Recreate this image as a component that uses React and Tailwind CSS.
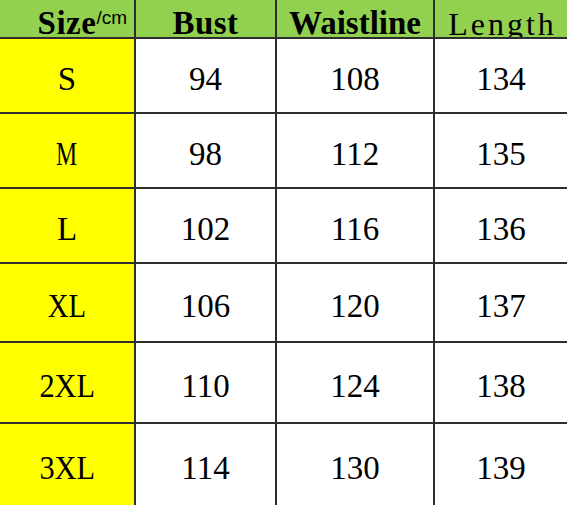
const rows = [
  { size: 'S', fit: '', bust: 94, waist: 108, length: 134 },
  { size: 'M', fit: 'scale-x-[0.72]', bust: 98, waist: 112, length: 135 },
  { size: 'L', fit: '', bust: 102, waist: 116, length: 136 },
  { size: 'XL', fit: 'scale-x-[0.87]', bust: 106, waist: 120, length: 137 },
  { size: '2XL', fit: 'scale-x-[0.92]', bust: 110, waist: 124, length: 138 },
  { size: '3XL', fit: 'scale-x-[0.92]', bust: 114, waist: 130, length: 139 },
]

const serif = "font-['Liberation_Serif','Times_New_Roman',serif]"

function Cell({ children, className = '' }) {
  return (
    <div className={`flex items-center justify-center bg-white pt-[7px] text-[33px] leading-none text-black ${serif} ${className}`}>
      {children}
    </div>
  )
}

export default function App() {
  return (
    <div className="w-[567px] h-[505px] overflow-hidden bg-white">
      <div className="grid grid-cols-[134px_139px_156px_132px] grid-rows-[37px_73px_73px_73px_77px_79px_81px] gap-[2px] bg-[#2e2e2e]">
        <div className={`flex justify-end overflow-hidden bg-[#92d050] pt-[7px] pr-[7px] text-[33px] font-bold leading-none text-black ${serif}`}>
          <span>
            <span className="tracking-[0.5px]">Size</span>
            <span className="align-[10px] font-['Liberation_Sans',Arial,sans-serif] text-[19px] font-normal leading-none">/cm</span>
          </span>
        </div>
        <div className={`flex justify-center overflow-hidden bg-[#92d050] pt-[7px] text-[33px] font-bold leading-none tracking-[0.5px] text-black ${serif}`}>Bust</div>
        <div className={`flex justify-center overflow-hidden bg-[#92d050] pt-[7px] text-[33px] font-bold leading-none text-black ${serif}`}>Waistline</div>
        <div className={`flex justify-center overflow-hidden bg-[#92d050] pt-[8px] pl-[3px] text-[32px] leading-none tracking-[3px] text-black ${serif}`}>Length</div>

        {rows.map((r) => (
          <div key={r.size} className="contents">
            <Cell className="bg-[#ffff00]!">
              <span className={`inline-block ${r.fit}`}>{r.size}</span>
            </Cell>
            <Cell>{r.bust}</Cell>
            <Cell>{r.waist}</Cell>
            <Cell>{r.length}</Cell>
          </div>
        ))}
      </div>
    </div>
  )
}
